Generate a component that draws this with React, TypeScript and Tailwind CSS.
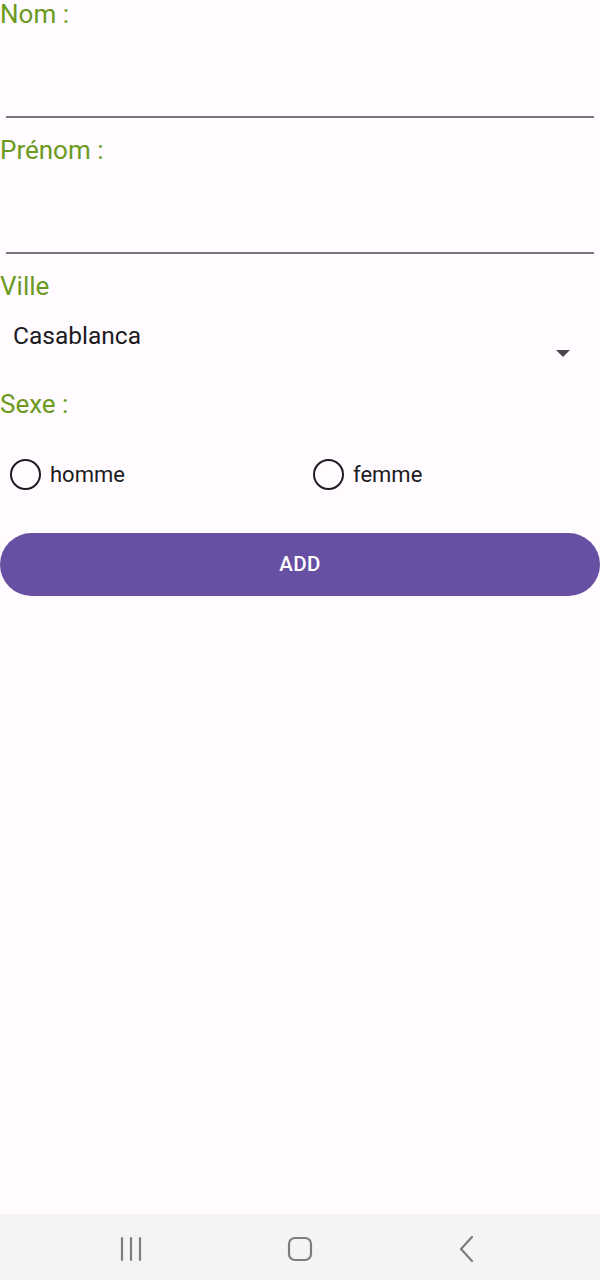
import React from 'react';

function Label({ children, className = '' }: { children: React.ReactNode; className?: string }) {
  return <div className={`h-[28px] text-[26px] leading-[28px] text-[#6b9a1e] ${className}`}>{children}</div>;
}

function Radio({ label }: { label: string }) {
  return (
    <div className="flex items-center">
      <span className="w-[31px] h-[31px] rounded-full border-[2.5px] border-[#1c1b1f]" />
      <span className="ml-[9px] text-[22px] text-[#1c1b1f]">{label}</span>
    </div>
  );
}

export default function App() {
  return (
    <div className="h-[1280px] flex flex-col bg-[#fffbfe] font-['Roboto',sans-serif]">
      <div className="flex-1 flex flex-col">
        <Label>Nom :</Label>
        <div className="mx-[6px] h-[90px] border-b-2 border-[#79767d]" />

        <Label className="mt-[18px]">Prénom :</Label>
        <div className="mx-[6px] h-[90px] border-b-2 border-[#79767d]" />

        <Label className="mt-[18px]">Ville</Label>
        <div className="flex items-start justify-between h-[90px] pl-[13px] pr-[30px]">
          <span className="mt-[21px] text-[24.5px] leading-[30px] text-[#1c1b1f]">Casablanca</span>
          <span className="mt-[50px] w-0 h-0 border-l-[7px] border-r-[7px] border-t-[7px] border-l-transparent border-r-transparent border-t-[#49454f]" />
        </div>

        <Label>Sexe :</Label>
        <div className="grid grid-cols-2 mt-[40px] pl-[10px]">
          <Radio label="homme" />
          <div className="pl-[8px]">
            <Radio label="femme" />
          </div>
        </div>

        <button className="mt-[42px] h-[63px] w-full rounded-full bg-[#6750a4] text-white text-[20.5px] font-medium tracking-[0.3px]">
          ADD
        </button>
      </div>

      <div className="h-[66px] pt-[4px] bg-[#f4f4f4] flex items-center justify-around px-[70px]">
        <svg width="30" height="30" viewBox="0 0 30 30" className="ml-[-20px]">
          <path d="M4 4v22M13 4v22M22 4v22" stroke="#7d7d7d" strokeWidth="2.2" strokeLinecap="round" />
        </svg>
        <svg width="30" height="30" viewBox="0 0 30 30">
          <rect x="4" y="4" width="22" height="22" rx="6" fill="none" stroke="#7d7d7d" strokeWidth="2.2" />
        </svg>
        <svg width="30" height="30" viewBox="0 0 30 30" className="mr-[-20px]">
          <path d="M20 3L9 15l11 12" fill="none" stroke="#7d7d7d" strokeWidth="2.2" strokeLinecap="round" strokeLinejoin="round" />
        </svg>
      </div>
    </div>
  );
}
